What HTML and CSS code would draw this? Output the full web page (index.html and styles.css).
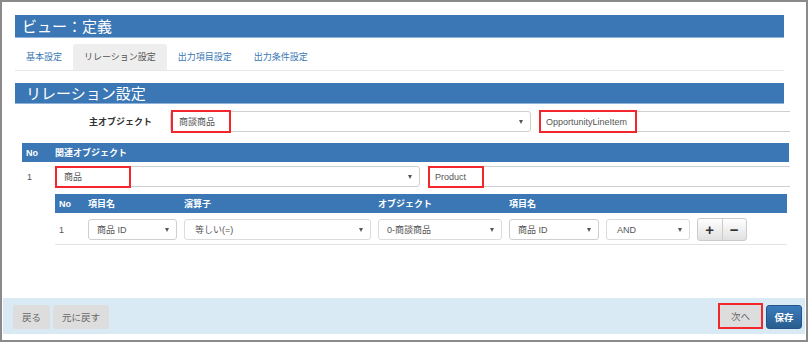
FILE: index.html
```html
<!DOCTYPE html>
<html lang="ja">
<head>
<meta charset="utf-8">
<title>ビュー：定義</title>
<link rel="stylesheet" href="styles.css">
</head>
<body>
<div class="frame">
  <div class="main">
    <div class="title">ビュー：定義</div>
    <ul class="tabs">
      <li class="tab">基本設定</li>
      <li class="tab active">リレーション設定</li>
      <li class="tab">出力項目設定</li>
      <li class="tab">出力条件設定</li>
    </ul>
    <div class="section-title">リレーション設定</div>

    <div class="main-obj">
      <div class="label">主オブジェクト</div>
      <div class="field select w-main">
        <span>商談商品</span><i class="caret"></i>
        <span class="mark mark-a"></span>
      </div>
      <div class="field input w-main-input">
        <span>OpportunityLineItem</span>
        <span class="mark mark-b"></span>
      </div>
    </div>

    <div class="rel">
      <div class="rel-head">
        <span class="c-no">No</span><span>関連オブジェクト</span>
      </div>
      <div class="rel-row">
        <span class="c-no num">1</span>
        <div class="field select w-rel">
          <span>商品</span><i class="caret"></i>
          <span class="mark mark-c"></span>
        </div>
        <div class="field input w-rel-input">
          <span>Product</span>
          <span class="mark mark-d"></span>
        </div>
      </div>

      <div class="sub">
        <div class="sub-head grid">
          <span class="pad">No</span>
          <span>項目名</span>
          <span>演算子</span>
          <span>オブジェクト</span>
          <span>項目名</span>
          <span></span>
          <span></span>
        </div>
        <div class="sub-row grid">
          <span class="pad num">1</span>
          <div class="field select"><span>商品 ID</span><i class="caret"></i></div>
          <div class="field select light"><span class="ind">等しい(=)</span><i class="caret"></i></div>
          <div class="field select light"><span>0-商談商品</span><i class="caret"></i></div>
          <div class="field select"><span>商品 ID</span><i class="caret"></i></div>
          <div class="field select light"><span class="ind">AND</span><i class="caret"></i></div>
          <div class="btn-group"><span class="pm">+</span><span class="pm">−</span></div>
        </div>
      </div>
    </div>
  </div>

  <div class="footer">
    <div class="left">
      <span class="btn">戻る</span>
      <span class="btn">元に戻す</span>
    </div>
    <div class="right">
      <span class="next-mark"><span class="btn next">次へ</span></span>
      <span class="btn save">保存</span>
    </div>
  </div>
</div>
</body>
</html>
```

FILE: styles.css
```css
* { box-sizing: border-box; }
html, body { margin: 0; padding: 0; background: #fff; }
body {
  font-family: "Liberation Sans", "Noto Sans CJK JP", sans-serif;
  font-size: 9px;
  color: #555;
}
.frame {
  width: 808px;
  height: 342px;
  border: 2px solid #8a8a8a;
  display: flex;
  flex-direction: column;
  background: #fff;
}
.main {
  flex: 1;
  padding: 13px 22px 0 13px;
}
.title {
  height: 23px;
  background: #3a77b4;
  border-bottom: 1px solid #8fb2d8;
  color: #fff;
  font-size: 15px;
  line-height: 21px;
  padding-left: 7px;
  font-family: "Noto Sans CJK JP", sans-serif;
}
.tabs {
  list-style: none;
  margin: 6px 0 0;
  padding: 0;
  display: flex;
  height: 27px;
  border-bottom: 1px solid #e6e6e6;
}
.tab {
  padding: 0 11px;
  line-height: 26px;
  color: #3a78b5;
  font-family: "Noto Sans CJK JP", sans-serif;
  font-size: 9px;
  border-radius: 3px 3px 0 0;
}
.tab.active {
  background: #eeeeee;
  color: #555;
}
.section-title {
  margin-top: 12px;
  height: 21px;
  background: #3a77b4;
  border-bottom: 1px solid #8fb2d8;
  color: #fff;
  font-size: 15px;
  line-height: 19px;
  padding-left: 11px;
  font-family: "Noto Sans CJK JP", sans-serif;
}
.main-obj {
  display: flex;
  align-items: center;
  margin-top: 7px;
  margin-right: -6px;
}
.label {
  width: 137px;
  text-align: right;
  font-weight: bold;
  color: #333;
  margin-right: 18px;
}
.field {
  position: relative;
  height: 21px;
  border: 1px solid #cfcfcf;
  border-radius: 3px;
  display: flex;
  align-items: center;
  justify-content: space-between;
  padding: 0 7px 0 8px;
  color: #555;
  background: #fff;
}
.field.input {
  border-radius: 0;
  border-right: none;
  justify-content: flex-start;
  padding-left: 6px;
}
.field.light { border-color: #dcdcdc; }
.ind { padding-left: 2px; }
.caret {
  width: 0;
  height: 0;
  border-left: 2.5px solid transparent;
  border-right: 2.5px solid transparent;
  border-top: 4px solid #555;
}
.w-main { width: 361px; }
.w-main-input { width: 251px; margin-left: 8px; }
.mark {
  position: absolute;
  border: 2px solid #f2262b;
  pointer-events: none;
}
.mark-a { left: 0; top: -2px; width: 60px; height: 23px; }
.mark-b { left: -1px; top: -2px; width: 98px; height: 23px; }
.mark-c { left: -1px; top: -1px; width: 76px; height: 22px; }
.mark-d { left: -1px; top: -1px; width: 56px; height: 22px; }

.rel {
  margin: 11px -5px 0 7px;
}
.rel-head {
  height: 19px;
  background: #3a77b4;
  color: #fff;
  font-weight: bold;
  display: flex;
  align-items: center;
}
.c-no {
  width: 33px;
  padding-left: 4px;
}
.num { padding-left: 5px; color: #555; font-weight: normal; }
.rel-row {
  display: flex;
  align-items: center;
  margin-top: 4px;
}
.w-rel { width: 365px; }
.w-rel-input { flex: 1; margin-left: 8px; padding-left: 7px; margin-right: -1px; }

.sub {
  margin: 7px 2px 0 33px;
}
.grid {
  display: grid;
  grid-template-columns: 26px 89px 187px 124px 90px 84px 50px;
  column-gap: 7px;
  align-items: center;
}
.sub-head {
  height: 19px;
  background: #3a77b4;
  color: #fff;
  font-weight: bold;
}
.pad { padding-left: 4px; }
.sub-row {
  padding: 5px 0 3px;
  border-bottom: 1px solid #e3e3e3;
}
.sub-row .num { padding-left: 4px; }
.btn-group {
  display: flex;
  height: 23px;
  border: 1px solid #cccccc;
  border-radius: 3px;
  background: linear-gradient(#ffffff, #e0e0e0);
  align-self: start;
}
.pm {
  flex: 1;
  display: flex;
  align-items: center;
  justify-content: center;
  font-size: 15px;
  font-weight: bold;
  color: #333;
}
.pm + .pm { border-left: 1px solid #cccccc; }

.footer {
  height: 36px;
  margin: 0 1px 6px;
  background: #d9eaf4;
  display: flex;
  justify-content: space-between;
  align-items: flex-start;
  padding: 7px 3px 0 10px;
}
.left, .right { display: flex; }
.right { margin-top: -2px; align-items: flex-start; }
.btn {
  height: 24px;
  line-height: 24px;
  padding: 0 9px;
  border-radius: 3px;
  background: #dddddd;
  color: #666;
  font-size: 9.5px;
  font-family: "Noto Sans CJK JP", sans-serif;
  margin-right: 3px;
}
.right .btn { margin-right: 0; }
.next-mark {
  display: block;
  border: 2px solid #f2262b;
  width: 45px;
  height: 26px;
}
.next {
  display: block;
  width: 41px;
  height: 22px;
  line-height: 22px;
  text-align: center;
  padding: 0;
}
.save {
  width: 36px;
  height: 24px;
  margin-top: 2px;
  padding: 0;
  text-align: center;
  margin-left: 3px;
  background: linear-gradient(#3b7bbd, #285e8e);
  border: 1px solid #24558a;
  line-height: 22px;
  color: #fff;
  font-weight: bold;
}
```
